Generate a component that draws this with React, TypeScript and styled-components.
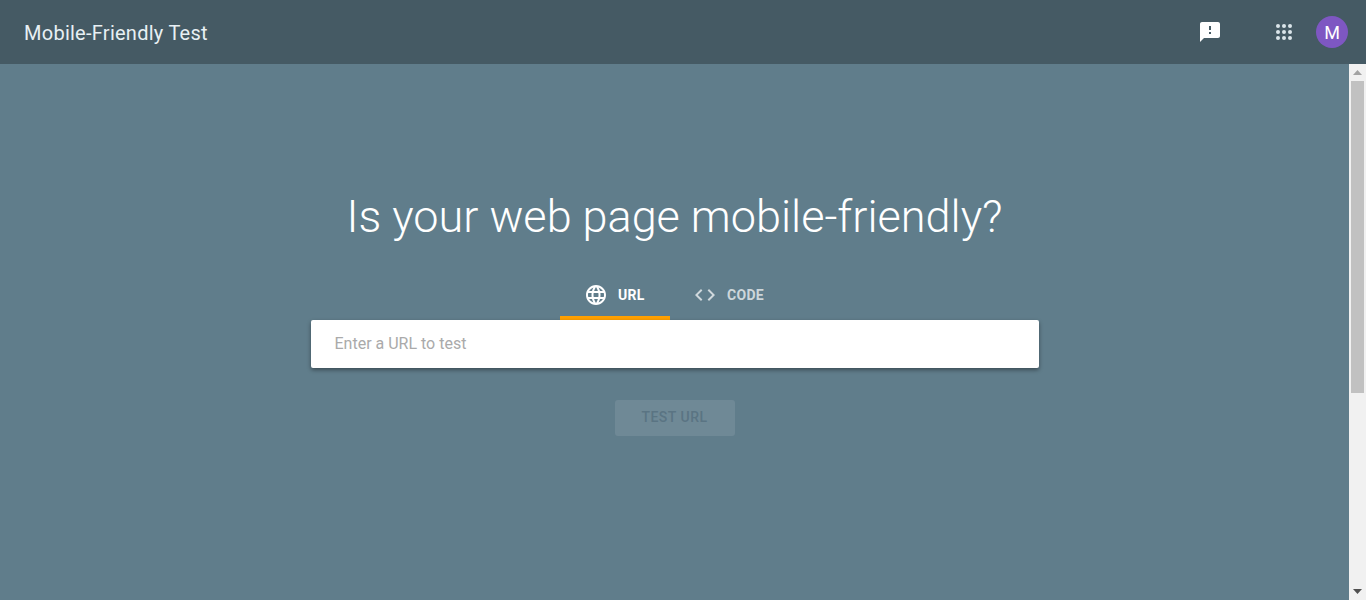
import React from "react";
import styled, { createGlobalStyle } from "styled-components";
import { MdCode, MdFeedback, MdLanguage } from "react-icons/md";

const GlobalStyle = createGlobalStyle`
  html, body {
    margin: 0;
    padding: 0;
    overflow: hidden;
    font-family: Roboto, "Liberation Sans", sans-serif;
  }
`;

const Page = styled.div`
  display: flex;
  flex-direction: column;
  height: 600px;
  overflow: hidden;
  background: #607d8b;
`;

const Header = styled.header`
  display: flex;
  align-items: center;
  flex: none;
  height: 64px;
  padding: 0 18px 0 24px;
  box-sizing: border-box;
  background: #455a64;
`;

const Title = styled.div`
  flex: 1;
  padding-top: 2px;
  font-size: 20px;
  letter-spacing: 0.26px;
  color: #e8f0f4;
`;

const IconButton = styled.div`
  display: flex;
  width: 24px;
  height: 24px;
  margin-right: ${(props: { $gap: number }) => props.$gap}px;
`;

const Avatar = styled.div`
  display: flex;
  align-items: center;
  justify-content: center;
  width: 32px;
  height: 32px;
  border-radius: 50%;
  background: #7e57c2;
  color: #fff;
  font-size: 18px;
`;

const Body = styled.div`
  display: flex;
  flex: 1;
  min-height: 0;
`;

const Main = styled.main`
  display: flex;
  flex: 1;
  flex-direction: column;
  align-items: center;
  padding-top: 125px;
`;

const Heading = styled.h1`
  margin: 0;
  font-size: 45px;
  font-weight: 300;
  line-height: 56px;
  color: #fff;
`;

const Tabs = styled.div`
  display: flex;
  margin-top: 27px;
`;

const Tab = styled.div<{ $active?: boolean }>`
  display: flex;
  align-items: center;
  gap: 10px;
  height: 48px;
  min-width: 110px;
  padding: 1px 23px 0 24px;
  box-sizing: border-box;
  border-bottom: 4px solid ${(props) => (props.$active ? "#ffa000" : "transparent")};
  font-size: 14px;
  font-weight: 700;
  letter-spacing: 0.3px;
  color: ${(props) => (props.$active ? "#fff" : "rgba(255, 255, 255, 0.7)")};

  & + & {
    margin-left: -1px;
    padding-right: 25px;
  }
`;

const UrlInput = styled.input`
  display: block;
  width: 728px;
  height: 48px;
  padding: 0 24px 2px;
  box-sizing: border-box;
  border: 0;
  border-radius: 2px;
  outline: 0;
  background: #fff;
  box-shadow: 0 2px 4px rgba(0, 0, 0, 0.4);
  font-family: inherit;
  font-size: 16px;
  font-weight: 400;

  &::placeholder {
    color: #aaaaaa;
    opacity: 1;
  }
`;

const TestButton = styled.button`
  width: 120px;
  height: 36px;
  margin-top: 32px;
  padding: 0 0 2px;
  border: 0;
  border-radius: 3px;
  background: #6f8996;
  color: #5a7483;
  font-family: inherit;
  font-size: 14px;
  font-weight: 500;
  letter-spacing: 0.5px;
`;

const Scrollbar = styled.div`
  display: flex;
  flex: none;
  flex-direction: column;
  align-items: center;
  width: 17px;
  background: #f1f1f1;
`;

const ArrowBox = styled.div`
  display: flex;
  flex: none;
  align-items: center;
  justify-content: center;
  width: 17px;
  height: 17px;
`;

const Thumb = styled.div`
  flex: none;
  width: 13px;
  height: 312px;
  background: #c1c1c1;
`;

const Spacer = styled.div`
  flex: 1;
`;

const App = () => {
  return (
    <Page>
      <GlobalStyle />
      <Header>
        <Title>Mobile-Friendly Test</Title>
        <IconButton $gap={50}>
          <MdFeedback size={24} color="#fff" />
        </IconButton>
        <IconButton $gap={20}>
          <svg width="24" height="24" viewBox="0 0 24 24" fill="#dbe5ea">
            {[6, 12, 18].map((y) =>
              [6, 12, 18].map((x) => <circle key={`${x}-${y}`} cx={x} cy={y} r="2" />)
            )}
          </svg>
        </IconButton>
        <Avatar>M</Avatar>
      </Header>
      <Body>
        <Main>
          <Heading>Is your web page mobile-friendly?</Heading>
          <Tabs>
            <Tab $active>
              <MdLanguage size={24} />
              URL
            </Tab>
            <Tab>
              <MdCode size={24} />
              CODE
            </Tab>
          </Tabs>
          <UrlInput placeholder="Enter a URL to test" />
          <TestButton type="button" disabled>
            TEST URL
          </TestButton>
        </Main>
        <Scrollbar>
          <ArrowBox>
            <svg width="9" height="5" viewBox="0 0 9 5" fill="#a3a3a3">
              <path d="M4.5 0L9 5H0z" />
            </svg>
          </ArrowBox>
          <Thumb />
          <Spacer />
          <ArrowBox>
            <svg width="9" height="5" viewBox="0 0 9 5" fill="#505050">
              <path d="M0 0h9L4.5 5z" />
            </svg>
          </ArrowBox>
        </Scrollbar>
      </Body>
    </Page>
  );
};

export default App;
